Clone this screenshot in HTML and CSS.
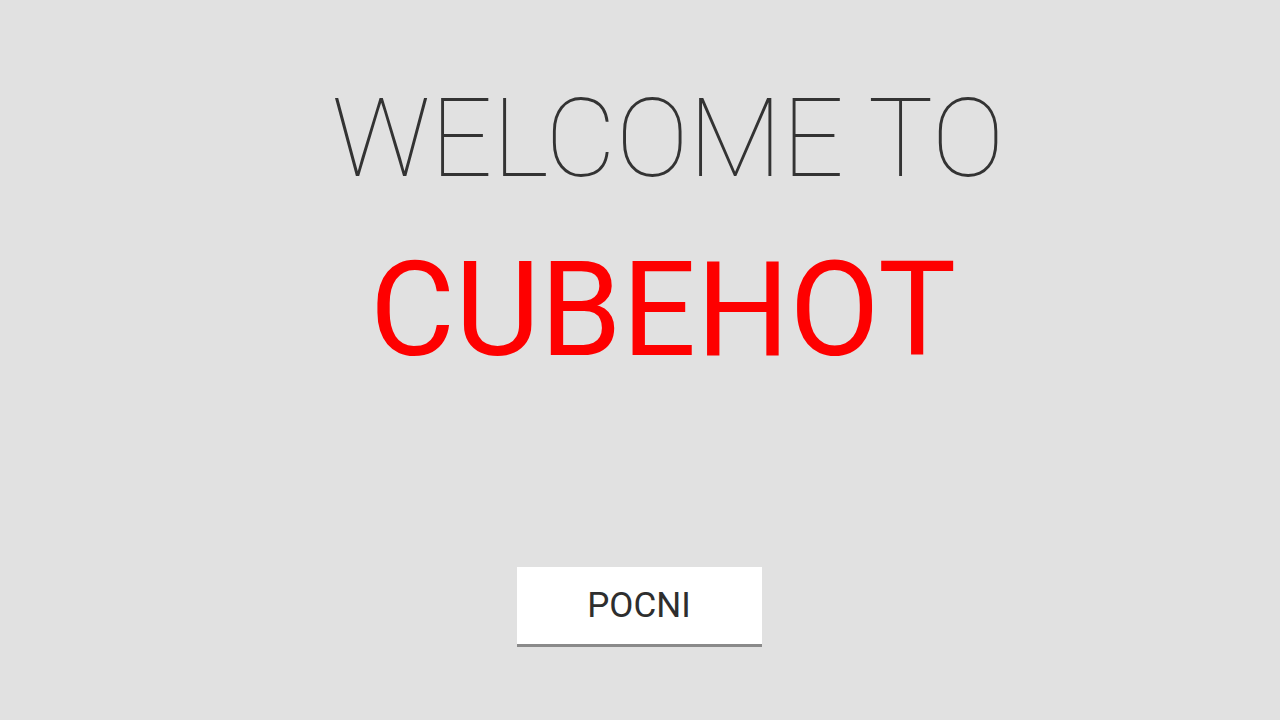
FILE: index.html
```html
<!DOCTYPE html>
<html>
<head>
<meta charset="utf-8">
<link rel="stylesheet" href="styles.css">
</head>
<body>
<main class="screen">
  <h1 class="welcome">WELCOME TO</h1>
  <h2 class="brand">CUBEHOT</h2>
  <button class="start">POCNI</button>
</main>
</body>
</html>
```
FILE: styles.css
```css
html, body {
  margin: 0;
  padding: 0;
  background: #e1e1e1;
  width: 1280px;
  height: 720px;
  overflow: hidden;
  font-family: Roboto, "Liberation Sans", sans-serif;
}
.screen {
  display: flex;
  flex-direction: column;
  align-items: center;
  padding-top: 85px;
}
.welcome {
  margin: 0;
  font-size: 109px;
  line-height: 1;
  font-weight: 100;
  color: #333333;
  transform: translateX(28px);
}
.brand {
  margin: 51px 0 0 0;
  font-size: 131px;
  line-height: 1;
  font-weight: 400;
  color: #fe0000;
  transform: translateX(23px);
}
.start {
  margin-top: 191px;
  width: 245px;
  height: 80px;
  background: #ffffff;
  border: none;
  border-bottom: 3px solid #8a8a8a;
  font-family: Roboto, "Liberation Sans", sans-serif;
  font-size: 35px;
  color: #2e2e2e;
  padding: 0;
  transform: translateX(-1px);
}
```
